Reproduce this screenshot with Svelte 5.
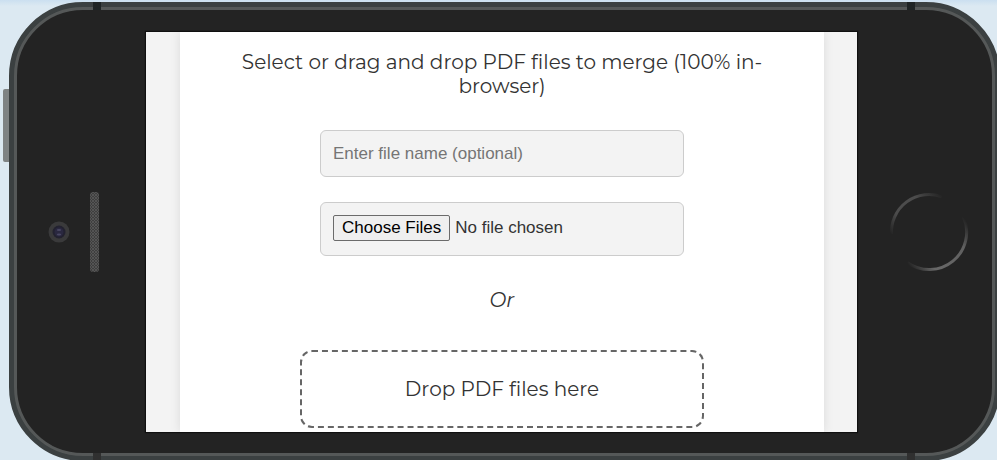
<script lang="ts">
  let fileName = $state('');
  let files = $state<FileList | undefined>(undefined);
  let dragging = $state(false);

  function onDragOver(e: DragEvent) {
    e.preventDefault();
    dragging = true;
  }

  function onDrop(e: DragEvent) {
    e.preventDefault();
    dragging = false;
    if (e.dataTransfer?.files.length) {
      files = e.dataTransfer.files;
    }
  }
</script>

<main class="stage">
  <div class="phone">
    <span class="switch"></span>
    <span class="antenna top left"></span>
    <span class="antenna top right"></span>
    <span class="antenna bottom left"></span>
    <span class="antenna bottom right"></span>

    <div class="face">
      <div class="side earpiece">
        <svg class="camera" viewBox="0 0 22 22" aria-hidden="true">
          <circle cx="11" cy="11" r="10.5" fill="#3a3a3b" />
          <circle cx="11" cy="11" r="6.5" fill="#232230" />
          <circle cx="11" cy="11" r="4.5" fill="#2a2840" />
          <ellipse cx="11" cy="9" rx="2.2" ry="1" fill="#4a4863" />
          <ellipse cx="11" cy="13.5" rx="2.2" ry="1" fill="#4a4863" />
        </svg>
        <svg class="speaker" viewBox="0 0 9 80" aria-hidden="true">
          <defs>
            <pattern id="mesh" width="3" height="3" patternUnits="userSpaceOnUse">
              <rect width="3" height="3" fill="#3e3e3e" />
              <path d="M0 0L3 3M3 0L0 3" stroke="#5c5c5c" stroke-width="0.7" />
            </pattern>
          </defs>
          <rect width="9" height="80" rx="3" fill="url(#mesh)" />
        </svg>
      </div>

      <div class="screen">
        <form class="card" onsubmit={(e) => e.preventDefault()}>
          <h1>Select or drag and drop PDF files to merge (100% in-browser)</h1>
          <input
            class="field"
            type="text"
            placeholder="Enter file name (optional)"
            aria-label="File name"
            bind:value={fileName}
          />
          <input
            class="field file"
            type="file"
            accept="application/pdf"
            aria-label="PDF files"
            multiple
            bind:files
          />
          <p class="or">Or</p>
          <div
            class="drop"
            class:dragging
            role="region"
            aria-label="Drop area"
            ondragover={onDragOver}
            ondragleave={() => (dragging = false)}
            ondrop={onDrop}
          >
            Drop PDF files here
          </div>
        </form>
      </div>

      <div class="side home">
        <svg class="ring" viewBox="0 0 80 80" fill="none" stroke-width="3" aria-hidden="true">
          <defs>
            <linearGradient id="ringTop" gradientUnits="userSpaceOnUse" x1="2" y1="42" x2="54" y2="4">
              <stop offset="0" stop-color="#4c4c4c" stop-opacity="0" />
              <stop offset="0.25" stop-color="#4c4c4c" />
              <stop offset="0.65" stop-color="#4c4c4c" />
              <stop offset="1" stop-color="#4c4c4c" stop-opacity="0" />
            </linearGradient>
            <linearGradient id="ringBottom" gradientUnits="userSpaceOnUse" x1="18" y1="71" x2="75" y2="26">
              <stop offset="0" stop-color="#686868" stop-opacity="0" />
              <stop offset="0.25" stop-color="#686868" />
              <stop offset="0.75" stop-color="#606060" />
              <stop offset="1" stop-color="#606060" stop-opacity="0" />
            </linearGradient>
          </defs>
          <path d="M2.5 42A37.5 37.5 0 0 1 52.8 4.8" stroke="url(#ringTop)" />
          <path d="M74.5 25A37.5 37.5 0 0 1 18.5 70.7" stroke="url(#ringBottom)" />
        </svg>
      </div>
    </div>
  </div>
</main>

<style>
  :global(body) {
    margin: 0;
    background: #dce9f2;
  }
  .stage {
    box-sizing: border-box;
    height: 100vh;
    padding: 2px 0 0 9px;
    overflow: hidden;
    background: linear-gradient(#cbdff0, #dce9f2 6px);
  }
  .phone {
    position: relative;
    margin-right: -3px;
    border: 5px solid #3b4041;
    border-radius: 74px;
    background: #3b4041;
  }
  .face {
    display: flex;
    align-items: center;
    padding: 22px 0 21px;
    border: 3px solid #555858;
    border-radius: 69px;
    background: #232323;
  }
  .switch {
    position: absolute;
    top: 82px;
    left: -11px;
    width: 6px;
    height: 73px;
    border-radius: 2px 0 0 2px;
    background: #7f8384;
  }
  .antenna {
    position: absolute;
    width: 8px;
    height: 8px;
    background: #1f2425;
  }
  .antenna.top {
    top: -5px;
  }
  .antenna.bottom {
    bottom: -5px;
    background: #303030;
  }
  .antenna.left {
    left: 79px;
  }
  .antenna.right {
    right: 80px;
  }
  .side {
    display: flex;
    align-items: center;
    flex-shrink: 0;
    box-sizing: border-box;
  }
  .earpiece {
    width: 129px;
    padding-left: 31px;
    gap: 20px;
  }
  .camera {
    width: 22px;
    height: 22px;
  }
  .speaker {
    width: 9px;
    height: 80px;
  }
  .home {
    width: 135px;
    padding-left: 32px;
  }
  .ring {
    width: 80px;
    height: 80px;
  }
  .screen {
    flex: 1;
    min-width: 0;
    padding: 0 33px 0 34px;
    overflow: hidden;
    background: #f3f3f3;
    box-shadow: 0 0 1px 1px #101010;
  }
  .card {
    display: flex;
    flex-direction: column;
    align-items: center;
    padding: 18px 56px 4px;
    background: #fff;
    box-shadow: 0 0 10px rgba(0, 0, 0, 0.1);
    color: #333;
    font-family: Montserrat, Inter, sans-serif;
    font-size: 20px;
    line-height: 24px;
    text-align: center;
  }
  h1 {
    margin: 0 0 32px;
    font-size: 20px;
    font-weight: 400;
    line-height: 24px;
  }
  .field {
    box-sizing: border-box;
    width: 100%;
    max-width: 364px;
    height: 47px;
    margin: 0 0 25px;
    padding: 12px;
    border: 1px solid #ccc;
    border-radius: 6px;
    background: #f3f3f3;
    color: #333;
    font-family: Arial, "Liberation Sans", sans-serif;
    font-size: 17px;
  }
  .field::placeholder {
    color: #757575;
  }
  .file {
    height: 54px;
    margin-bottom: 32px;
  }
  .file::file-selector-button {
    box-sizing: border-box;
    height: 26px;
    margin: 0 5px 0 0;
    padding: 0 8px;
    border: 1px solid #6b6b6b;
    border-radius: 2px;
    background: #efefef;
    color: #000;
    font: inherit;
  }
  .or {
    margin: 0 0 38px;
    font-style: italic;
  }
  .drop {
    box-sizing: border-box;
    width: 100%;
    max-width: 404px;
    padding: 25px;
    border: 2px dashed #666;
    border-radius: 12px;
  }
  .drop.dragging {
    background: #f3f3f3;
  }
</style>
